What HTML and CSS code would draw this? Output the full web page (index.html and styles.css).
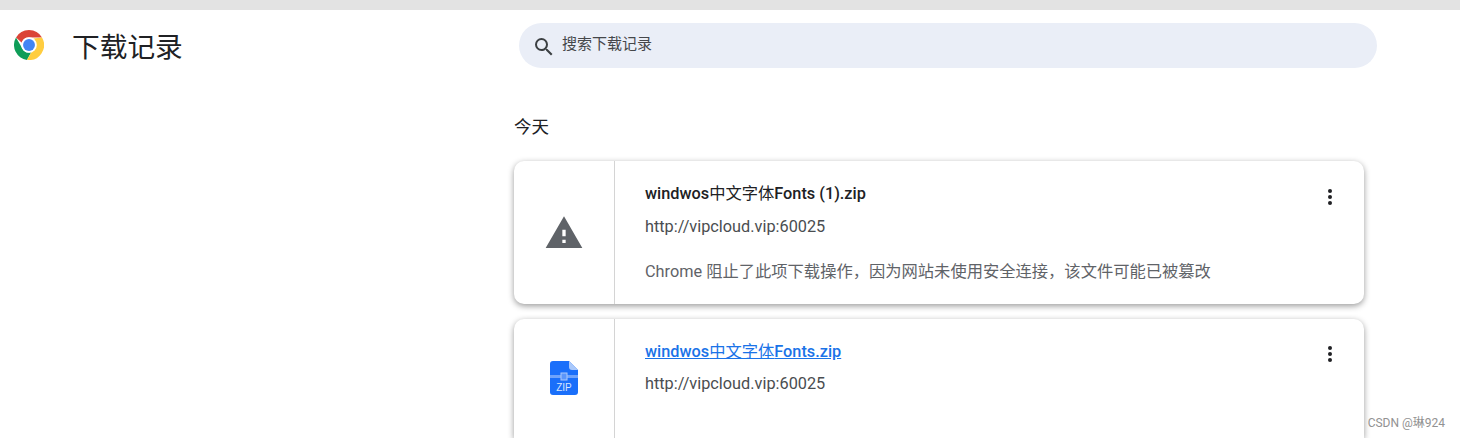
FILE: index.html
```html
<!DOCTYPE html>
<html lang="zh-CN">
<head>
    <meta charset="UTF-8">
    <title>下载记录</title>
    <link rel="stylesheet" href="styles.css">
</head>
<body>
    <div class="topbar"></div>
    <div class="header">
        <div class="brand">
            <svg class="logo" viewBox="0 0 48 48">
                <path fill="#db4437" d="M24 0a24 24 0 0 1 20.8 12H24a12 12 0 0 0-11.5 8.5L3.2 12A24 24 0 0 1 24 0z"/>
                <path fill="#0f9d58" d="M3.2 12 13.6 30A12 12 0 0 0 27.5 35.5L20.7 47.8A24 24 0 0 1 3.2 12z"/>
                <path fill="#ffcd40" d="M44.8 12A24 24 0 0 1 20.7 47.8L31 30a12 12 0 0 0 2-14 12 12 0 0 0-2-2.5z"/>
                <circle cx="24" cy="24" r="12.5" fill="#fff"/>
                <circle cx="24" cy="24" r="9.5" fill="#4285f4"/>
            </svg>
            <h1 class="title">下载记录</h1>
        </div>
        <div class="search">
            <svg class="search-icon" viewBox="0 0 24 24"><path fill="#3c4043" d="M15.5 14h-.79l-.28-.27A6.47 6.47 0 0 0 16 9.5 6.5 6.5 0 1 0 9.5 16c1.61 0 3.09-.59 4.23-1.57l.27.28v.79l5 4.99L20.49 19l-4.99-5zm-6 0C7.01 14 5 11.99 5 9.5S7.01 5 9.5 5 14 7.01 14 9.5 11.99 14 9.5 14z"/></svg>
            <span class="search-text">搜索下载记录</span>
        </div>
    </div>
    <div class="content">
        <div class="day">今天</div>
        <div class="card card-blocked">
            <div class="card-icon">
                <svg class="warn" viewBox="0 0 24 24"><path fill="#5f6368" d="M1 21h22L12 2 1 21zm12-3h-2v-2h2v2zm0-4h-2v-4h2v4z"/></svg>
            </div>
            <div class="card-body">
                <div class="name">windwos<span class="cjk">中文字体</span>Fonts (1).zip</div>
                <div class="url">http://vipcloud.vip:60025</div>
                <div class="desc">Chrome 阻止了此项下载操作，因为网站未使用安全连接，该文件可能已被篡改</div>
            </div>
            <div class="more"><i></i><i></i><i></i></div>
        </div>
        <div class="card card-done">
            <div class="card-icon">
                <svg class="zip" viewBox="0 0 28 34">
                    <path fill="#1a6ffa" d="M3 0h16l9 9v22a3 3 0 0 1-3 3H3a3 3 0 0 1-3-3V3a3 3 0 0 1 3-3z"/>
                    <path fill="#a9c8fb" d="M19 0l9 9h-6a3 3 0 0 1-3-3z"/>
                    <rect y="14" width="28" height="3" fill="#6fa3fb"/>
                    <rect x="11" y="12" width="6" height="7" fill="#5b96fb" stroke="#a9c8fb"/>
                    <text x="14" y="30" class="zip-text">ZIP</text>
                </svg>
            </div>
            <div class="card-body">
                <a class="name name-link" href="#">windwos<span class="cjk">中文字体</span>Fonts.zip</a>
                <div class="url">http://vipcloud.vip:60025</div>
            </div>
            <div class="more"><i></i><i></i><i></i></div>
        </div>
    </div>
    <div class="watermark">CSDN @琳924</div>
</body>
</html>
```

FILE: styles.css
```css
html, body {margin: 0; height: 438px; overflow: hidden;}
body {position: relative; background-color: #fff; font-family: Roboto, "Noto Sans CJK SC", sans-serif; color: #202124;}
.topbar {height: 10px; background-color: #e3e3e3;}
.header {display: flex; height: 75px;}
.brand {display: flex; align-items: center; width: 519px; padding-left: 14px; box-sizing: border-box; height: 72px;}
.logo {width: 30px; height: 30px; margin-top: -2px;}
.title {margin: 4px 0 0 28px; font-size: 27.7px; font-weight: 400; line-height: 36px;}
.search {display: flex; align-items: center; width: 858px; height: 45px; margin-top: 13px; border-radius: 23px; background-color: #eaeef7;}
.search-icon {width: 24px; height: 24px; margin: 2px 0 0 13px;}
.search-text {margin-left: 6px; margin-bottom: 6px; font-size: 15px; color: #45474a;}
.content {width: 850px; margin-left: 514px;}
.day {height: 76px; padding: 30px 0 0; box-sizing: border-box; font-size: 17.5px; line-height: 24px;}
.card {display: flex; width: 850px; height: 143px; margin-bottom: 15px; border-radius: 10px; background-color: #fff; box-shadow: 0 2px 6px rgba(0, 0, 0, .4);}
.card-done {height: 119px; margin-bottom: 0; border-radius: 10px 10px 0 0;}
.card-icon {display: flex; justify-content: center; width: 101px; padding-top: 52px; box-sizing: border-box; border-right: 1px solid #d4d4d4;}
.card-done .card-icon {padding-top: 50px;}
.warn {width: 40px; height: 40px;}
.zip {width: 28px; height: 34px; margin-top: -8px;}
.zip-text {font-family: "Liberation Sans", sans-serif; font-size: 10px; fill: #d7e6fe; text-anchor: middle;}
.card-body {flex: 1; padding: 21px 0 0 30px;}
.name {display: block; font-size: 16.3px; font-weight: 500; line-height: 24px; color: #202124;}
.cjk {font-weight: 400;}
.name-link {color: #1a73e8;}
.url {margin-top: 9px; font-size: 16.3px; line-height: 24px; color: #4a4d50;}
.card-done .url {margin-top: 8px;}
.desc {margin-top: 21px; font-size: 16.3px; line-height: 24px; color: #5f6368;}
.more {display: flex; flex-direction: column; gap: 2px; width: 4px; margin: 28px 32px 0 0;}
.card-done .more {margin-top: 27px;}
.more i {width: 4px; height: 4px; border-radius: 50%; background-color: #202124;}
.watermark {position: absolute; right: 15px; bottom: 7px; font-size: 12px; line-height: 16px; color: #929292;}
```
